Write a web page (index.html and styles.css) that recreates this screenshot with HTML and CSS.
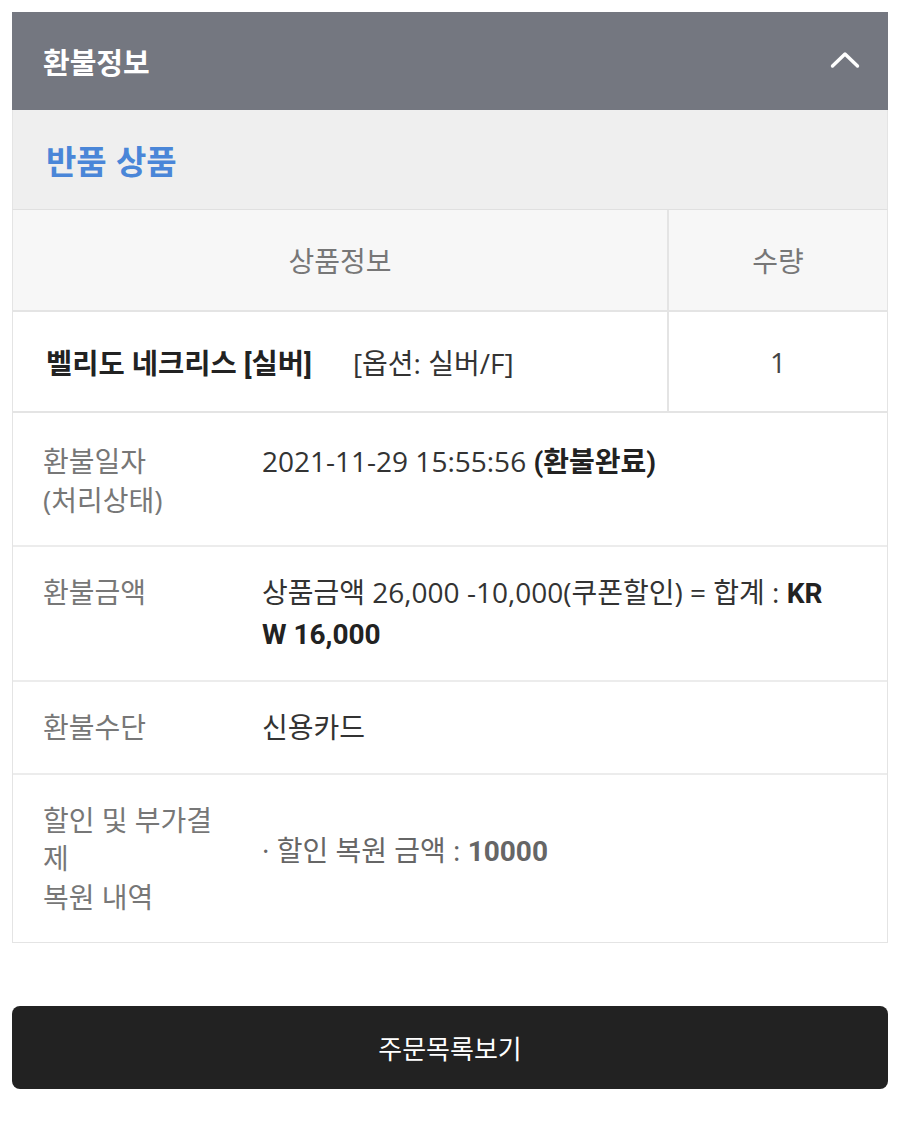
FILE: index.html
```html
<!DOCTYPE html>
<html lang="ko">
<head>
<meta charset="utf-8">
<link rel="stylesheet" href="styles.css">
</head>
<body>
<div class="page">
  <section class="panel">
    <header class="panel-head">
      <h2 class="panel-title">환불정보</h2>
      <svg class="chevron" width="30" height="20" viewBox="0 0 30 20"><polyline points="2.5,16 15,4 27.5,16" fill="none" stroke="#fff" stroke-width="3.4" stroke-linecap="round" stroke-linejoin="round"/></svg>
    </header>
    <div class="sub-head">반품 상품</div>
    <div class="box">
      <div class="prod-grid">
        <div class="th">상품정보</div>
        <div class="th qty">수량</div>
        <div class="td prod"><strong>벨리도 네크리스 [실버]</strong><span class="opt">[옵션: 실버/F]</span></div>
        <div class="td qty">1</div>
      </div>
      <div class="info-row first">
        <div class="label">환불일자<br>(처리상태)</div>
        <div class="value">2021-11-29 15:55:56 <b>(환불완료)</b></div>
      </div>
      <div class="info-row">
        <div class="label">환불금액</div>
        <div class="value break">상품금액 26,000 -10,000(쿠폰할인) = 합계 : <b>KRW 16,000</b></div>
      </div>
      <div class="info-row">
        <div class="label">환불수단</div>
        <div class="value">신용카드</div>
      </div>
      <div class="info-row center">
        <div class="label">할인 및 부가결제<br>복원 내역</div>
        <div class="value muted">· 할인 복원 금액 : <b>10000</b></div>
      </div>
    </div>
  </section>
  <button class="btn">주문목록보기</button>
</div>
</body>
</html>
```

FILE: styles.css
```css
* { box-sizing: border-box; }
html, body { margin: 0; padding: 0; background: #fff; }
body {
  font-family: "Open Sans", "Noto Sans CJK KR", sans-serif;
  color: #333;
}
.page { padding: 12px 12px 0 12px; }
.panel-head {
  height: 98px;
  background: #747780;
  display: flex;
  align-items: center;
  justify-content: space-between;
  padding: 0 28px 0 31px;
}
.panel-title {
  margin: 0;
  color: #fff;
  font-size: 29px;
  font-weight: 700;
  font-family: "Noto Sans CJK KR", sans-serif;
}
.chevron { display: block; margin-top: -2px; }
.sub-head {
  height: 99px;
  background: #efefef;
  display: flex;
  align-items: center;
  padding-left: 33px;
  color: #4a86d8;
  font-size: 33px;
  font-weight: 700;
  font-family: "Noto Sans CJK KR", sans-serif;
  border-left: 1px solid #e4e4e4;
  border-right: 1px solid #e4e4e4;
}
.box {
  border: 1px solid #e4e4e4;
  border-top: 1px solid #e0e0e0;
}
.prod-grid {
  display: grid;
  grid-template-columns: 654px 1fr;
}
.th {
  height: 102px;
  background: #f7f7f7;
  display: flex;
  align-items: center;
  justify-content: center;
  color: #777;
  font-size: 28px;
  border-bottom: 2px solid #e4e4e4;
}
.th.qty, .td.qty { border-left: 2px solid #e4e4e4; }
.td {
  height: 101px;
  display: flex;
  align-items: center;
  font-size: 28px;
  color: #222;
  border-bottom: 2px solid #e4e4e4;
}
.td.prod { padding-left: 33px; }
.td.prod strong {
  font-weight: 700;
  font-family: Roboto, "Noto Sans CJK KR", sans-serif;
  font-size: 28.5px;
}
.td .opt { margin-left: 41px; color: #333; }
.td.qty { justify-content: center; color: #444; }
.info-row {
  display: flex;
  align-items: flex-start;
  padding: 26px 0;
  border-bottom: 2px solid #ececec;
  font-size: 28px;
  line-height: 38.5px;
}
.info-row.first { padding-top: 29px; }
.info-row:last-child { border-bottom: none; }
.info-row.center { align-items: center; }
.label {
  flex: 0 0 249px;
  padding: 0 30px 0 30px;
  color: #777;
}
.value {
  flex: 1;
  padding-right: 52px;
  color: #333;
}
.value b {
  font-weight: 700;
  color: #222;
  font-family: Roboto, "Noto Sans CJK KR", sans-serif;
}
.value.break { word-break: break-all; }
.value.muted { color: #666; margin-top: -14px; }
.value.muted b { color: #666; }
.btn {
  display: block;
  width: 100%;
  height: 83px;
  margin-top: 63px;
  background: #222;
  color: #fff;
  border: none;
  border-radius: 8px;
  font-size: 26px;
  font-family: "Noto Sans CJK KR", sans-serif;
}
```
